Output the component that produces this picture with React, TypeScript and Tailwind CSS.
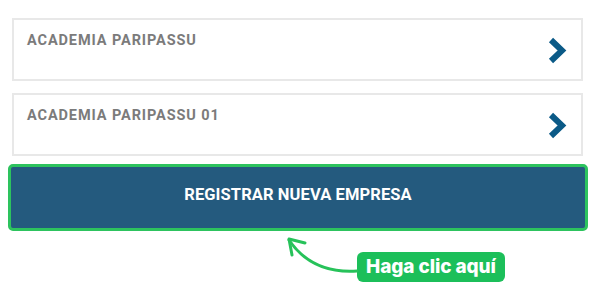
export default function App() {
  const companies = ["ACADEMIA PARIPASSU", "ACADEMIA PARIPASSU 01"];

  return (
    <div className="relative h-[297px] w-[594px] overflow-hidden bg-white font-['Roboto',sans-serif]">
      <div className="flex flex-col pl-[8px] pr-[6px] pt-[18px]">
        <div className="ml-[4px] mr-[5px] flex flex-col gap-[12px]">
          {companies.map((name) => (
            <div
              key={name}
              className="flex h-[63px] items-start justify-between border-2 border-[#e8e8e8] pl-[13px] pr-[14px] pt-[11px]"
            >
              <span className="text-[14.5px] font-bold leading-[20px] tracking-[0.9px] text-[#7b7b7b]">
                {name}
              </span>
              <svg width="20" height="27" viewBox="0 0 20 27" className="mt-[6px]">
                <path
                  d="M4 3 L15 13.5 L4 24"
                  fill="none"
                  stroke="#0b5a87"
                  strokeWidth="6"
                  strokeLinejoin="miter"
                />
              </svg>
            </div>
          ))}
        </div>

        <button className="mt-[8px] flex h-[67px] items-center justify-center rounded-[5px] border-[3px] border-[#2dc35e] bg-[#245a7e] pb-[4px]">
          <span className="text-[16.5px] font-bold tracking-[0.1px] text-white">
            REGISTRAR NUEVA EMPRESA
          </span>
        </button>

        <div className="mt-[21px] flex">
          <div className="ml-[349px] flex h-[30px] w-[148px] items-center justify-center rounded-[6px] bg-[#1cbf5a]">
            <span className="font-['Inter',sans-serif] text-[19px] font-extrabold leading-[24px] tracking-[-0.1px] text-white">
              Haga clic aquí
            </span>
          </div>
        </div>
      </div>

      <svg className="pointer-events-none absolute inset-0" width="594" height="297" viewBox="0 0 594 297">
        <path
          d="M357 271 Q312 274 289 240"
          fill="none"
          stroke="#27c25a"
          strokeWidth="3"
          strokeLinecap="round"
        />
        <path
          d="M305 243 L289 239 L292 255"
          fill="none"
          stroke="#27c25a"
          strokeWidth="3"
          strokeLinecap="round"
          strokeLinejoin="round"
        />
      </svg>
    </div>
  );
}
